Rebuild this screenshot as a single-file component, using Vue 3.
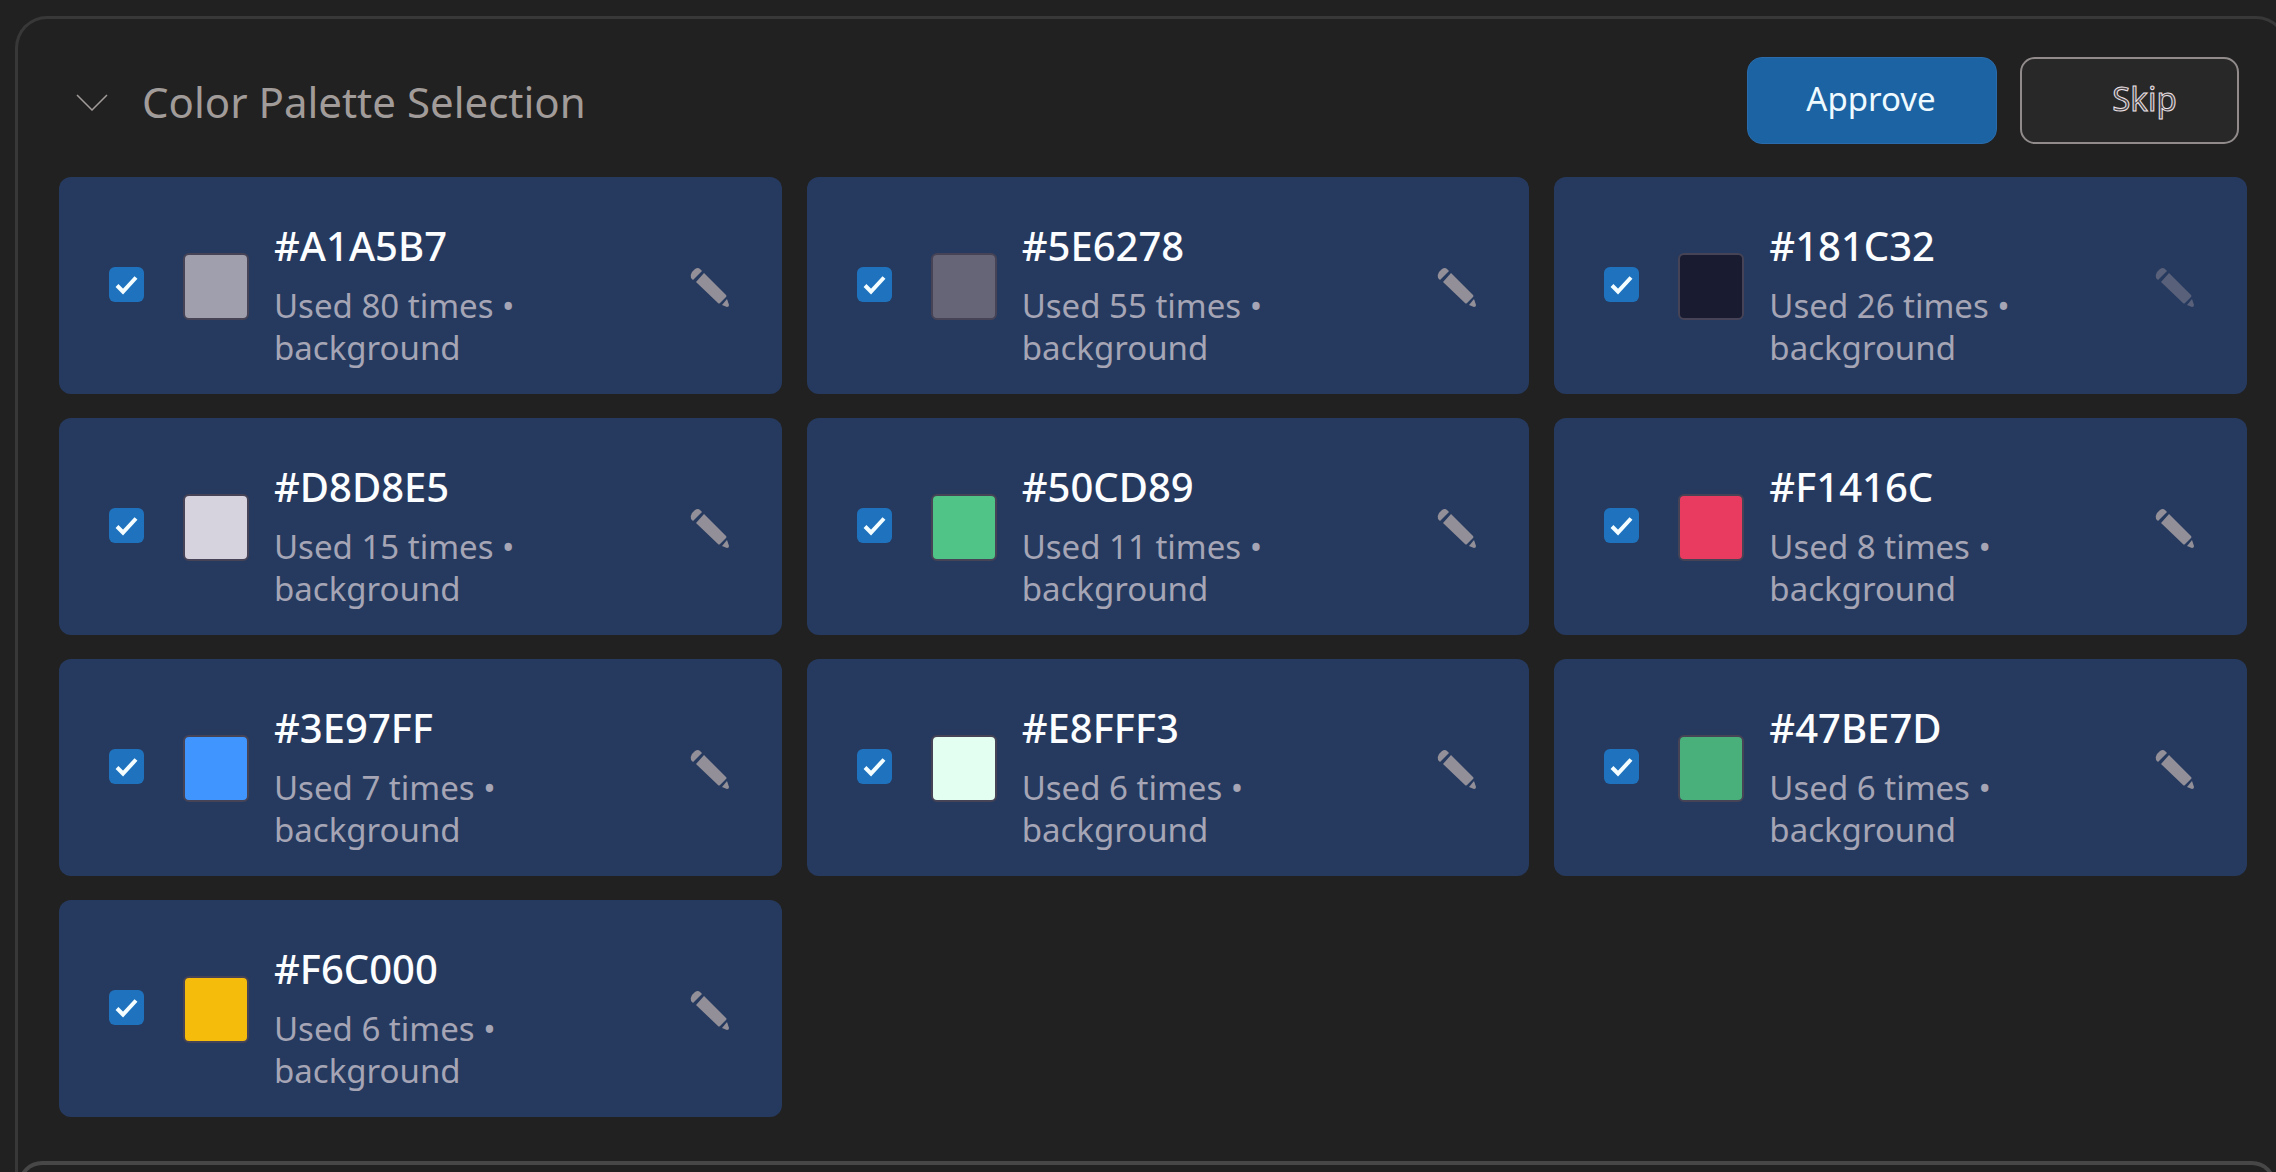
<script setup>
import { ref } from 'vue'

const open = ref(true)
const colors = ref([
  { hex: '#A1A5B7', uses: 80, swatch: '#a09fae', checked: true },
  { hex: '#5E6278', uses: 55, swatch: '#666477', checked: true },
  { hex: '#181C32', uses: 26, swatch: '#191b31', checked: true, faded: true },
  { hex: '#D8D8E5', uses: 15, swatch: '#d6d3df', checked: true },
  { hex: '#50CD89', uses: 11, swatch: '#4fc486', checked: true },
  { hex: '#F1416C', uses: 8, swatch: '#e93b5f', checked: true },
  { hex: '#3E97FF', uses: 7, swatch: '#4095ff', checked: true },
  { hex: '#E8FFF3', uses: 6, swatch: '#e3fff1', checked: true },
  { hex: '#47BE7D', uses: 6, swatch: '#49af7b', checked: true },
  { hex: '#F6C000', uses: 6, swatch: '#f5bc0c', checked: true },
])
</script>

<template>
  <main class="page">
    <section class="panel">
      <div class="content">
        <header class="head">
          <button class="toggle" type="button" :aria-expanded="open" @click="open = !open">
            <svg class="chevron" viewBox="0 0 32 18" aria-hidden="true">
              <path d="M1 2 L16 17 L31 2" fill="none" stroke="currentColor" stroke-width="1.5" />
            </svg>
            <span class="title">Color Palette Selection</span>
          </button>
          <div class="actions">
            <button class="btn approve" type="button">Approve</button>
            <button class="btn skip" type="button">Skip</button>
          </div>
        </header>

        <ul v-show="open" class="grid">
          <li v-for="(c, i) in colors" :key="c.hex" class="card">
            <input :id="'color-' + i" v-model="c.checked" class="check" type="checkbox" />
            <span class="swatch" :style="{ backgroundColor: c.swatch }"></span>
            <label class="info" :for="'color-' + i">
              <span class="hex">{{ c.hex }}</span>
              <span class="usage">Used {{ c.uses }} times • background</span>
            </label>
            <button class="edit" :class="{ faded: c.faded }" type="button" :aria-label="'Edit ' + c.hex">
              <svg viewBox="0 0 40 40" fill="currentColor" aria-hidden="true">
                <path d="M1 11 Q0 8 2 5 L5 2 Q8 0 10 2 L12 4 L3 13 Z" />
                <path d="M14 6 L36 28 Q37 29 36 30 L30 36 Q29 37 28 36 L6 15 Z" />
                <path d="M37 32 L39 38 Q39 40 37 40 L32 38 Z" />
              </svg>
            </button>
          </li>
        </ul>
      </div>
      <section class="next-panel"></section>
    </section>
  </main>
</template>

<style>
body {
  background: #212121;
}
</style>

<style scoped>
.page {
  box-sizing: border-box;
  height: 100vh;
  overflow: hidden;
  padding: 16px 0 0 15px;
  font-family: "Noto Sans", "Open Sans", sans-serif;
}

.panel {
  margin-right: -12px;
  border: 3px solid #383838;
  border-bottom: 0;
  border-radius: 32px 32px 0 0;
}

.content {
  padding: 38px 38px 44px 41px;
}

.head {
  display: flex;
  align-items: center;
  justify-content: space-between;
  padding-right: 8px;
  margin-bottom: 33px;
}

button {
  font: inherit;
  cursor: pointer;
}

.toggle {
  display: flex;
  align-items: center;
  gap: 34px;
  padding: 2px 0 0 17px;
  border: 0;
  background: none;
  color: #a19c9a;
}

.chevron {
  width: 32px;
  height: 18px;
}

.title {
  font-size: 42px;
  line-height: 56px;
}

.actions {
  display: flex;
  gap: 23px;
}

.btn {
  box-sizing: border-box;
  height: 87px;
  border-radius: 15px;
  font-size: 33px;
  line-height: 44px;
}

.approve {
  width: 250px;
  padding: 0 2px 4px 0;
  border: 1px solid #2a6cab;
  background: #1b63a3;
  color: #eefaff;
}

.skip {
  width: 219px;
  padding: 0 0 4px 30px;
  border: 2px solid #918c8b;
  background: #282828;
  color: #4a4648;
  -webkit-text-stroke: 1px #eee4e9;
}

.grid {
  display: grid;
  grid-template-columns: 722fr 722fr 692fr;
  gap: 24px 25px;
  margin: 0;
  padding: 0;
  list-style: none;
}

.card {
  box-sizing: border-box;
  display: flex;
  align-items: center;
  min-height: 217px;
  padding: 13px 52px 0 50px;
  border-radius: 12px;
  background: #263a5f;
}

.check {
  appearance: none;
  flex: none;
  width: 35px;
  height: 35px;
  margin: 0 39px 16px 0;
  border-radius: 6px;
  background: #1f73be;
}

.check:checked {
  background: #1f73be url("data:image/svg+xml,%3Csvg xmlns='http://www.w3.org/2000/svg' viewBox='0 0 35 35'%3E%3Cpath d='M8 18.5 L14 24.5 L27 10.5' fill='none' stroke='%23f4fdff' stroke-width='4'/%3E%3C/svg%3E") center / 100%;
}

.swatch {
  box-sizing: border-box;
  flex: none;
  width: 66px;
  height: 67px;
  margin: 0 25px 11px 0;
  border: 2px solid #454355;
  border-radius: 6px;
}

.info {
  display: flex;
  flex: 1;
  flex-direction: column;
  gap: 13px;
  margin: 5px 20px 0 0;
}

.hex {
  color: #fbfdff;
  font-size: 40px;
  font-weight: 500;
  line-height: 52px;
}

.usage {
  color: #a5a5b5;
  font-size: 33px;
  line-height: 42px;
}

.edit {
  flex: none;
  width: 40px;
  height: 40px;
  margin-bottom: 10px;
  padding: 0;
  border: 0;
  background: none;
  color: #928f98;
}

.edit svg {
  display: block;
  width: 40px;
  height: 40px;
}

.edit.faded {
  color: #596079;
}

.next-panel {
  height: 60px;
  margin-right: 9px;
  border: 4px solid #474747;
  border-bottom: 0;
  border-radius: 24px 24px 0 0;
}
</style>
